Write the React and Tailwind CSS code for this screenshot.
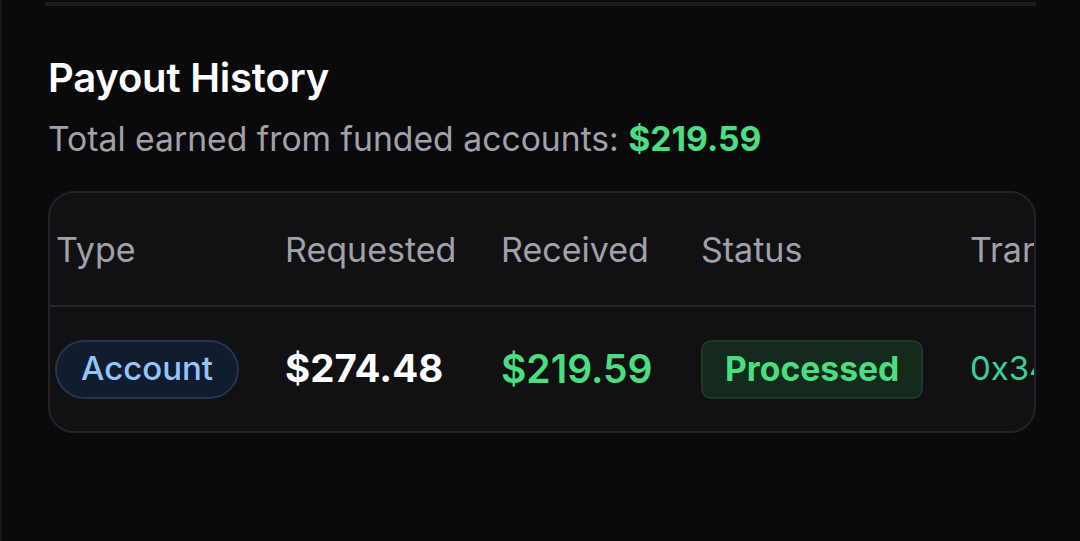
const rows = [
  {
    type: "Account",
    requested: "$274.48",
    received: "$219.59",
    status: "Processed",
    tx: "0x34a9c1e7f2b8d05",
  },
];

const PayoutHistory = () => {
  return (
    <div className="min-h-[541px] w-[1080px] bg-[#0a0a0c] border-l-2 border-[#18181b] font-['Inter','Liberation_Sans',sans-serif] overflow-hidden">
      <div className="ml-[43px] mr-[44px] h-[4px] mt-[2px] bg-[#1c1c20]" />
      <div className="px-[46px] pt-[48px]">
        <h2 className="text-[40px] leading-[48px] font-semibold text-white tracking-[-0.2px]">
          Payout History
        </h2>
        <p className="mt-[15px] text-[33.7px] leading-[44px] text-[#a1a1aa]">
          Total earned from funded accounts:{" "}
          <span className="font-bold text-[#4ade80]">$219.59</span>
        </p>
        <div className="mt-[30px] w-[988px] rounded-[26px] border-2 border-[#232327] bg-[#111113] overflow-hidden">
          <table className="table-fixed border-collapse text-left w-[1120px]">
            <thead>
              <tr className="h-[113px] border-b-2 border-[#27272a]">
                <th className="w-[235px] pl-[6px] font-normal text-[34px] text-[#a1a1aa]">Type</th>
                <th className="w-[216px] font-normal text-[34px] text-[#a1a1aa]">Requested</th>
                <th className="w-[200px] font-normal text-[34px] text-[#a1a1aa]">Received</th>
                <th className="w-[269px] font-normal text-[34px] text-[#a1a1aa]">Status</th>
                <th className="font-normal text-[34px] text-[#a1a1aa] whitespace-nowrap">Transaction</th>
              </tr>
            </thead>
            <tbody>
              {rows.map((r) => (
                <tr key={r.tx} className="h-[125px]">
                  <td className="pl-[5px]">
                    <span className="inline-flex items-center h-[59px] px-[24px] rounded-full border-2 border-[#233553] bg-[#111c2e] text-[33px] font-medium text-[#93c5fd]">
                      {r.type}
                    </span>
                  </td>
                  <td className="text-[38.5px] font-bold text-white">{r.requested}</td>
                  <td className="text-[39px] font-semibold text-[#4ade80]">{r.received}</td>
                  <td>
                    <span className="inline-flex items-center h-[59px] px-[22px] rounded-[10px] border-2 border-[#1d3a27] bg-[#132a1c] text-[33.7px] font-bold text-[#4ade80]">
                      {r.status}
                    </span>
                  </td>
                  <td className="text-[33px] text-[#34d399] whitespace-nowrap">{r.tx}</td>
                </tr>
              ))}
            </tbody>
          </table>
        </div>
      </div>
    </div>
  );
};

export default function App() {
  return <PayoutHistory />;
}
